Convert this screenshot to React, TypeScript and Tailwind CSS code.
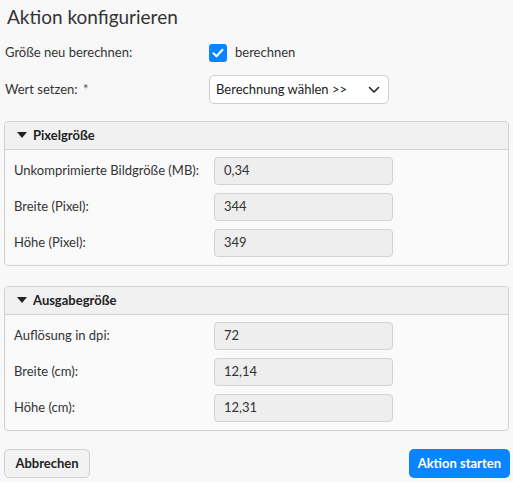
import React from 'react'

const FONT = "font-['Lato','Noto_Sans',sans-serif]"

function Triangle() {
  return (
    <svg width="10" height="7" viewBox="0 0 10 7" className="shrink-0">
      <path d="M0 0h10L5 6z" fill="#222" />
    </svg>
  )
}

function ReadRow({ label, value }: { label: string; value: string }) {
  return (
    <div className="flex items-center h-[28px]">
      <span className="w-[200px] shrink-0 text-[13px] text-[#333]">{label}</span>
      <div className="w-[179px] h-[28px] flex items-center px-[9px] rounded-[4px] border border-[#d2d2d2] bg-[#eeeeee] text-[13px] text-[#333]">
        {value}
      </div>
    </div>
  )
}

function Panel({ title, rows }: { title: string; rows: [string, string][] }) {
  return (
    <div className="mx-[4px] rounded-[4px] border border-[#d0d0d0] bg-[#fafafa] overflow-hidden">
      <div className="h-[28px] flex items-center gap-[6px] pl-[12px] bg-[#f1f1f1] border-b border-[#d0d0d0]">
        <Triangle />
        <span className="text-[13px] font-bold text-[#222]">{title}</span>
      </div>
      <div className="flex flex-col gap-[8px] pl-[9px] pt-[7px] pb-[8px]">
        {rows.map(([l, v]) => <ReadRow key={l} label={l} value={v} />)}
      </div>
    </div>
  )
}

export default function App() {
  return (
    <div className={`${FONT} w-[513px] h-[482px] bg-[#f8f8f8] overflow-hidden`}>
      <h1 className="pl-[7px] pt-[4px] text-[19px] leading-[26px] text-[#333]">Aktion konfigurieren</h1>

      <div className="flex items-center mt-[14px] h-[18px]">
        <span className="w-[209px] pl-[5px] text-[13px] text-[#333]">Größe neu berechnen:</span>
        <span className="w-[18px] h-[18px] rounded-[3px] bg-[#0a84ff] flex items-center justify-center">
          <svg width="12" height="10" viewBox="0 0 12 10">
            <path d="M1.5 5.2l3 3L10.5 1.8" stroke="#fff" strokeWidth="2" fill="none" strokeLinecap="round" strokeLinejoin="round" />
          </svg>
        </span>
        <span className="ml-[8px] text-[13px] text-[#333]">berechnen</span>
      </div>

      <div className="flex items-center mt-[13px] h-[29px]">
        <span className="w-[209px] pl-[5px] text-[13px] text-[#333]">
          Wert setzen: <span className="ml-[2px] text-[#555]">*</span>
        </span>
        <div className="w-[180px] h-[29px] rounded-[5px] border border-[#cfcfcf] bg-white flex items-center justify-between pl-[6px] pr-[8px] text-[13px] text-[#222]">
          <span>Berechnung wählen &gt;&gt;</span>
          <svg width="12" height="8" viewBox="0 0 12 8">
            <path d="M1.5 1.5l4.5 4.5 4.5-4.5" stroke="#222" strokeWidth="1.6" fill="none" strokeLinecap="round" strokeLinejoin="round" />
          </svg>
        </div>
      </div>

      <div className="mt-[17px]">
        <Panel
          title="Pixelgröße"
          rows={[
            ['Unkomprimierte Bildgröße (MB):', '0,34'],
            ['Breite (Pixel):', '344'],
            ['Höhe (Pixel):', '349'],
          ]}
        />
      </div>

      <div className="mt-[20px]">
        <Panel
          title="Ausgabegröße"
          rows={[
            ['Auflösung in dpi:', '72'],
            ['Breite (cm):', '12,14'],
            ['Höhe (cm):', '12,31'],
          ]}
        />
      </div>

      <div className="flex justify-between px-[4px] mt-[18px]">
        <button className="h-[29px] w-[86px] rounded-[5px] border border-[#cfcfcf] bg-[#f2f2f2] text-[13px] font-bold text-[#222]">
          Abbrechen
        </button>
        <button className="h-[29px] px-[9px] mr-[-1px] rounded-[5px] bg-[#0a84ff] text-[13px] font-bold text-white">
          Aktion starten
        </button>
      </div>
    </div>
  )
}
